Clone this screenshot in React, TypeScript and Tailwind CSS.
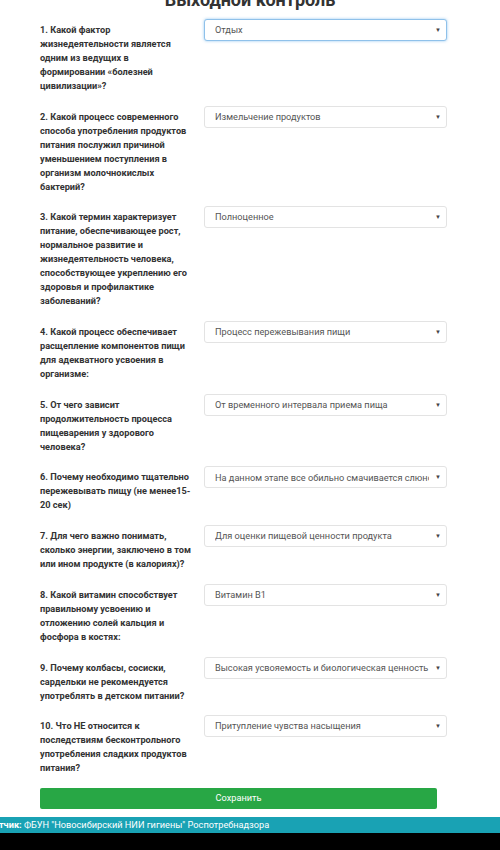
import React from "react";

const questions: { q: string; a: string; focused?: boolean }[] = [
  {
    q: "1. Какой фактор жизнедеятельности является одним из ведущих в формировании «болезней цивилизации»?",
    a: "Отдых",
    focused: true,
  },
  {
    q: "2. Какой процесс современного способа употребления продуктов питания послужил причиной уменьшением поступления в организм молочнокислых бактерий?",
    a: "Измельчение продуктов",
  },
  {
    q: "3. Какой термин характеризует питание, обеспечивающее рост, нормальное развитие и жизнедеятельность человека, способствующее укреплению его здоровья и профилактике заболеваний?",
    a: "Полноценное",
  },
  {
    q: "4. Какой процесс обеспечивает расщепление компонентов пищи для адекватного усвоения в организме:",
    a: "Процесс пережевывания пищи",
  },
  {
    q: "5. От чего зависит продолжительность процесса пищеварения у здорового человека?",
    a: "От временного интервала приема пища",
  },
  {
    q: "6. Почему необходимо тщательно пережевывать пищу (не менее15-20 сек)",
    a: "На данном этапе все обильно смачивается слюной",
  },
  {
    q: "7. Для чего важно понимать, сколько энергии, заключено в том или ином продукте (в калориях)?",
    a: "Для оценки пищевой ценности продукта",
  },
  {
    q: "8. Какой витамин способствует правильному усвоению и отложению солей кальция и фосфора в костях:",
    a: "Витамин В1",
  },
  {
    q: "9. Почему колбасы, сосиски, сардельки не рекомендуется употреблять в детском питании?",
    a: "Высокая усвояемость и биологическая ценность",
  },
  {
    q: "10. Что НЕ относится к последствиям бесконтрольного употребления сладких продуктов питания?",
    a: "Притупление чувства насыщения",
  },
];

function FakeSelect({ value, focused }: { value: string; focused?: boolean }) {
  return (
    <div
      className={
        focused
          ? "flex h-[22px] w-[243px] shrink-0 items-center rounded-[3px] border border-[#8fc1ea] bg-white pl-[10px] pr-[5px] shadow-[0_0_3px_rgba(102,175,233,0.7)]"
          : "flex h-[22px] w-[243px] shrink-0 items-center rounded-[3px] border border-[#e3e3e3] bg-white pl-[10px] pr-[5px]"
      }
    >
      <span className="min-w-0 flex-1 overflow-hidden whitespace-nowrap text-[9.2px] text-[#555]">
        {value}
      </span>
      <span className="ml-[6px] text-[6px] leading-none text-[#444]">▼</span>
    </div>
  );
}

export default function App() {
  return (
    <div className="flex min-h-[850px] flex-col overflow-hidden bg-white font-['Roboto','Liberation_Sans',sans-serif]">
      <h2 className="-mt-[10px] mb-[9px] text-center text-[18px] font-bold leading-[20px] text-[#333]">
        Выходной контроль
      </h2>

      <div className="flex flex-col px-[40px]">
        {questions.map((item) => (
          <div key={item.q} className="mb-[12.7px] flex gap-[9px]">
            <p className="w-[155px] pt-[4px] text-[9.2px] font-bold leading-[14px] text-[#333]">
              {item.q}
            </p>
            <FakeSelect value={item.a} focused={item.focused} />
          </div>
        ))}
      </div>

      <div className="px-[40px]">
        <button className="flex h-[21px] w-[397px] items-center justify-center rounded-[2px] bg-[#28a745] text-[9.2px] text-white">
          Сохранить
        </button>
      </div>

      <div className="mt-[8px] flex h-[16px] items-center overflow-hidden whitespace-nowrap bg-[#19a2b4] text-[9.2px] text-white">
        <span className="-ml-[37px]">
          <b>Разработчик:</b> ФБУН "Новосибирский НИИ гигиены" Роспотребнадзора
        </span>
      </div>

      <div className="flex-1 bg-black" />
    </div>
  );
}
